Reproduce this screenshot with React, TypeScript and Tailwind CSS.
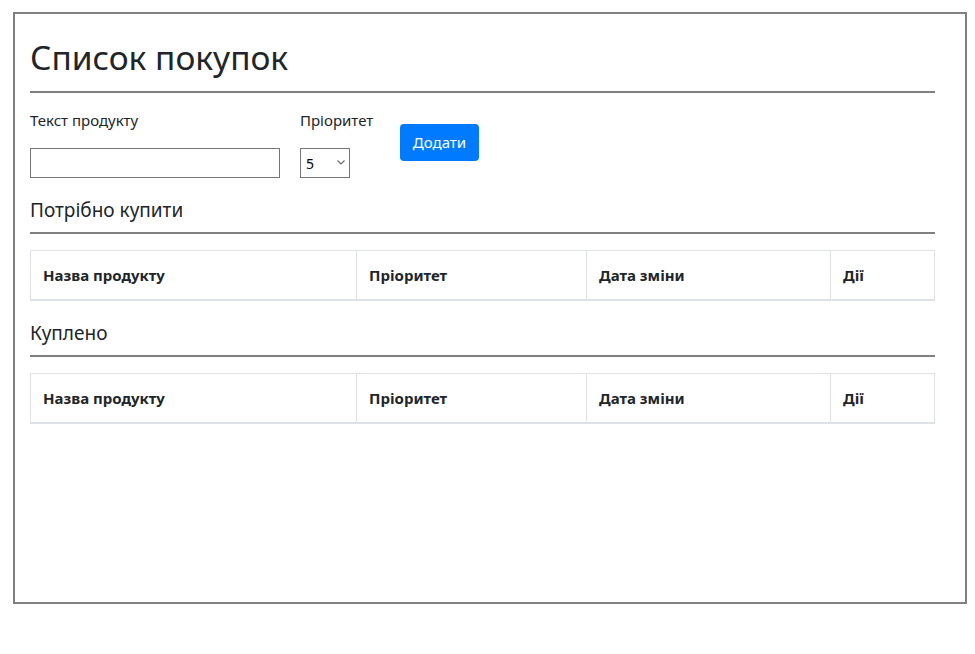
import { useState } from "react";

const font = { fontFamily: '"Noto Sans", "Open Sans", sans-serif' };

function ProductTable() {
  return (
    <table className="w-full border-collapse text-[15px] text-[#212529]">
      <thead>
        <tr>
          <th className="w-[326px] border border-[#dee2e6] border-b-2 px-3 py-3 text-left font-bold leading-6">
            Назва продукту
          </th>
          <th className="w-[230px] border border-[#dee2e6] border-b-2 px-3 py-3 text-left font-bold leading-6">
            Пріоритет
          </th>
          <th className="w-[244px] border border-[#dee2e6] border-b-2 px-3 py-3 text-left font-bold leading-6">
            Дата зміни
          </th>
          <th className="border border-[#dee2e6] border-b-2 px-3 py-3 text-left font-bold leading-6">
            Дії
          </th>
        </tr>
      </thead>
      <tbody></tbody>
    </table>
  );
}

export default function App() {
  const [text, setText] = useState("");
  const [priority, setPriority] = useState("5");

  return (
    <div className="bg-white min-h-[654px] pt-3 pl-[13px]" style={font}>
      <div className="w-[954px] h-[592px] border-2 border-[#808080] pl-[15px] pr-[30px] pt-[22px] text-[#212529]">
        <h1 className="text-[33.5px] leading-[43px] font-normal mb-3">Список покупок</h1>
        <hr className="border-0 border-t-2 border-[#808080] mb-4" />

        <div className="flex items-start">
          <div className="flex flex-col w-[270px]">
            <label className="text-[15px] leading-[22px] mb-[17px]">Текст продукту</label>
            <input
              type="text"
              value={text}
              onChange={(e) => setText(e.target.value)}
              className="w-[250px] h-[30px] border border-[#767676] px-1 outline-none"
            />
          </div>
          <div className="flex flex-col w-[100px]">
            <label className="text-[15px] leading-[22px] mb-[17px]">Пріоритет</label>
            <div className="relative w-[50px] h-[30px]">
              <select
                value={priority}
                onChange={(e) => setPriority(e.target.value)}
                className="appearance-none w-full h-full border border-[#767676] pl-[5px] text-[14px] text-black bg-white outline-none"
              >
                {["1", "2", "3", "4", "5"].map((p) => (
                  <option key={p} value={p}>
                    {p}
                  </option>
                ))}
              </select>
              <svg
                className="absolute right-[4px] top-[11px] pointer-events-none"
                width="10"
                height="7"
                viewBox="0 0 10 7"
              >
                <path d="M1.5 1.5 L5 5 L8.5 1.5" fill="none" stroke="#6b6b6b" strokeWidth="1.2" />
              </svg>
            </div>
          </div>
          <button className="mt-[15px] h-[37px] w-[79px] rounded bg-[#007bff] text-white text-[15px]">
            Додати
          </button>
        </div>

        <h4 className="text-[19px] leading-[24px] font-normal mt-[20px] mb-[10px]">Потрібно купити</h4>
        <hr className="border-0 border-t-2 border-[#808080] mb-4" />
        <ProductTable />

        <h4 className="text-[19px] leading-[24px] font-normal mt-[20px] mb-[10px]">Куплено</h4>
        <hr className="border-0 border-t-2 border-[#808080] mb-4" />
        <ProductTable />
      </div>
    </div>
  );
}
